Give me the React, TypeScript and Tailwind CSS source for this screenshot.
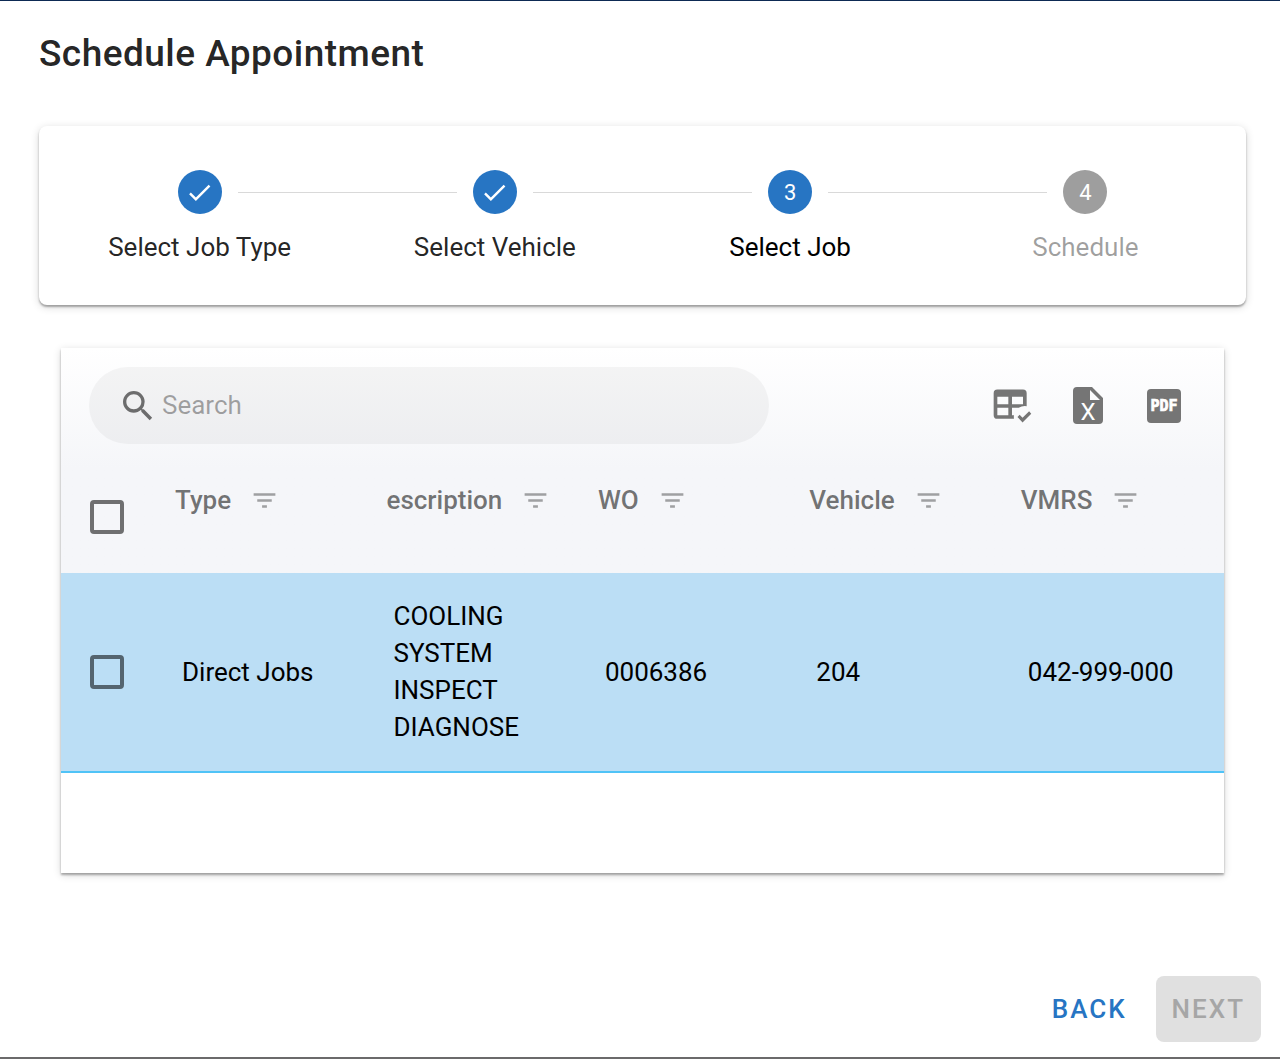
import React from 'react';
import clsx from 'clsx';
import { MdCheck, MdFilterList, MdSearch } from 'react-icons/md';

type StepState = 'done' | 'active' | 'pending';

const steps: { label: string; state: StepState }[] = [
  { label: 'Select Job Type', state: 'done' },
  { label: 'Select Vehicle', state: 'done' },
  { label: 'Select Job', state: 'active' },
  { label: 'Schedule', state: 'pending' },
];

const columns = ['Type', 'escription', 'WO', 'Vehicle', 'VMRS'];

const jobs = [
  {
    type: 'Direct Jobs',
    description: 'COOLING SYSTEM INSPECT DIAGNOSE',
    wo: '0006386',
    vehicle: '204',
    vmrs: '042-999-000',
  },
];

const cardShadow = 'shadow-[0_2px_2px_rgba(0,0,0,0.3),0_2px_8px_rgba(0,0,0,0.16)]';

const TableCheckIcon = () => (
  <svg viewBox="0 0 24 24" className="size-11" fill="currentColor" aria-hidden="true">
    <path d="M4 3h14a2 2 0 0 1 2 2v7.08a6.01 6.01 0 0 0-4.32.92H12v4h1.08c-.11.68-.11 1.35 0 2H4a2 2 0 0 1-2-2V5a2 2 0 0 1 2-2m0 4v4h6V7H4m8 0v4h6V7h-6m-8 6v4h6v-4H4m13.75 8L15 18l1.16-1.16 1.59 1.59 3.59-3.59 1.16 1.41L17.75 21" />
  </svg>
);

const ExcelIcon = () => (
  <svg viewBox="0 0 44 44" className="size-11" aria-hidden="true">
    <path
      d="M11 3h15l11 11v22a4 4 0 0 1-4 4H11a4 4 0 0 1-4-4V7a4 4 0 0 1 4-4zm13 3v10h10z"
      fill="currentColor"
      fillRule="evenodd"
    />
    <text x="22" y="36" textAnchor="middle" fontFamily="Roboto, sans-serif" fontSize="24" fill="#fff">
      X
    </text>
  </svg>
);

const PdfIcon = () => (
  <svg viewBox="0 0 44 44" className="size-11" aria-hidden="true">
    <rect x="5" y="5" width="34" height="34" rx="4" fill="currentColor" />
    <text
      x="22"
      y="27"
      textAnchor="middle"
      fontFamily="DejaVu Sans Mono, monospace"
      fontWeight="700"
      fontSize="15"
      fill="#fff"
      stroke="#fff"
      strokeWidth="0.7"
    >
      PDF
    </text>
  </svg>
);

const tools = [
  { label: 'Choose columns', Icon: TableCheckIcon },
  { label: 'Export to Excel', Icon: ExcelIcon },
  { label: 'Export to PDF', Icon: PdfIcon },
];

const Checkbox = ({ label }: { label: string }) => (
  <input
    type="checkbox"
    aria-label={label}
    className="block size-[34px] appearance-none rounded border-4 border-black/55 checked:bg-[#2775c3]"
  />
);

const Stepper = () => (
  <ol className={clsx('flex rounded-lg bg-white px-[13px] pt-11 pb-10', cardShadow)}>
    {steps.map((step, i) => (
      <li key={step.label} className="flex-1">
        <div className="flex items-center gap-4">
          <span className={clsx('h-px flex-1', i > 0 && 'bg-black/15')} />
          <span
            className={clsx(
              'flex size-11 items-center justify-center rounded-full text-[22px] text-white',
              step.state === 'pending' ? 'bg-[#9e9e9e]' : 'bg-[#2775c3]'
            )}
          >
            {step.state === 'done' ? <MdCheck size={29} /> : i + 1}
          </span>
          <span className={clsx('h-px flex-1', i < steps.length - 1 && 'bg-black/15')} />
        </div>
        <div
          className={clsx(
            'mt-[15px] text-center leading-9',
            step.state === 'done' && 'text-black/87',
            step.state === 'active' && 'text-black',
            step.state === 'pending' && 'text-black/38'
          )}
        >
          {step.label}
        </div>
      </li>
    ))}
  </ol>
);

const JobTable = () => (
  <section className={clsx('mx-[22px] mt-[43px] bg-white pb-[100px]', cardShadow)}>
    <div className="bg-linear-to-b from-white to-[#f5f6f9] to-[120px]">
      <div className="flex items-center justify-between pt-[19px] pr-[38px] pb-4 pl-7">
        <label className="flex h-[77px] w-[62%] items-center gap-1 rounded-full bg-black/4 pl-[29px]">
          <MdSearch size={40} className="text-black/55" />
          <input
            type="text"
            aria-label="Search"
            placeholder="Search"
            className="min-w-0 flex-1 bg-transparent outline-none placeholder:text-black/35"
          />
        </label>
        <div className="flex gap-8 text-[#757575]">
          {tools.map(({ label, Icon }) => (
            <button key={label} type="button" aria-label={label}>
              <Icon />
            </button>
          ))}
        </div>
      </div>
      <table className="w-full table-fixed text-left">
        <thead>
          <tr className="h-[113px]">
            <th className="w-23 pl-[29px]">
              <Checkbox label="Select all jobs" />
            </th>
            {columns.map((name, i) => (
              <th
                key={name}
                className={clsx('pb-8 pl-[22px] font-medium text-black/55', i < columns.length - 1 && 'w-2/11')}
              >
                <div className="flex items-center gap-[19px]">
                  {name}
                  <MdFilterList size={29} className="text-black/35" />
                </div>
              </th>
            ))}
          </tr>
        </thead>
        <tbody>
          {jobs.map((job) => (
            <tr key={job.wo} className="border-b-2 border-[#4fc3f7] bg-[#bbdef5] leading-[37px] text-black">
              <td className="pl-[29px]">
                <Checkbox label={`Select job ${job.wo}`} />
              </td>
              <td className="pl-[29px]">{job.type}</td>
              <td className="py-[25px] pr-7 pl-[29px]">{job.description}</td>
              <td className="pl-[29px]">{job.wo}</td>
              <td className="pl-[29px]">{job.vehicle}</td>
              <td className="pl-[29px]">{job.vmrs}</td>
            </tr>
          ))}
        </tbody>
      </table>
    </div>
  </section>
);

export default function App() {
  return (
    <div className="flex min-h-screen flex-col border-t border-b-2 border-t-[#0d2a54] border-b-[#6b6a6b] bg-white font-['Roboto',sans-serif] text-[26px]">
      <main className="pt-7 pr-[34px] pl-[39px]">
        <h1 className="mb-12 text-[37px] leading-[49px] font-medium tracking-[0.0125em] text-black/87">
          Schedule Appointment
        </h1>
        <Stepper />
        <JobTable />
      </main>
      <footer className="mt-auto flex justify-end gap-[13px] pt-12 pr-[19px] pb-[15px] font-medium tracking-[2px]">
        <button type="button" className="h-[66px] rounded-lg px-4 text-[#2775c3]">
          BACK
        </button>
        <button type="button" disabled className="h-[66px] rounded-lg bg-[#e0e0e0] px-4 text-[#a6a6a6]">
          NEXT
        </button>
      </footer>
    </div>
  );
}
